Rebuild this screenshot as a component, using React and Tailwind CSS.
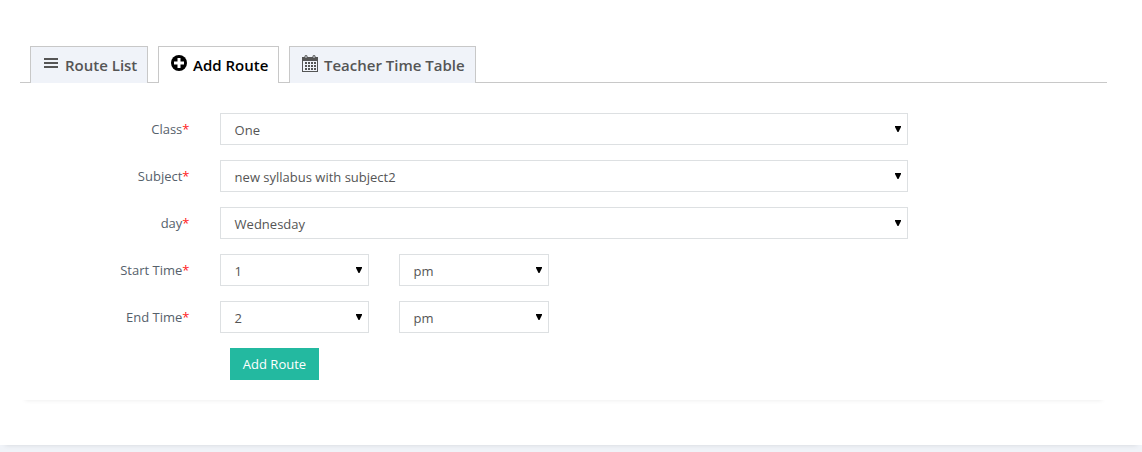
const font = "font-['Open_Sans','Noto_Sans',sans-serif]";

function MenuIcon() {
  return (
    <svg width="15" height="12" viewBox="0 0 15 12" fill="currentColor" shapeRendering="crispEdges">
      <rect y="1" width="14" height="2" />
      <rect y="5" width="14" height="2" />
      <rect y="9" width="14" height="2" />
    </svg>
  );
}

function PlusIcon() {
  return (
    <svg width="16" height="16" viewBox="0 0 16 16">
      <circle cx="8" cy="8" r="8" fill="currentColor" />
      <path d="M6.500 3h3v3.500H13v3H9.500V13h-3V9.500H3v-3h3.500z" fill="#fff" />
    </svg>
  );
}

function CalendarIcon() {
  return (
    <svg width="16" height="17" viewBox="0 0 16 17" fill="currentColor">
      <path d="M0 2h16v4H0z" />
      <path d="M0 6h1v10h14V6h1v11H0z" />
      <rect x="2.500" y="0" width="3" height="4" rx="1.500" />
      <rect x="10.500" y="0" width="3" height="4" rx="1.500" />
      <path d="M4 1v2M12 1v2" stroke="#d6dce5" strokeWidth="1" />
      {[7, 10, 13].map((y) =>
        [3, 6, 9, 12].map((x) => <rect key={`${x}-${y}`} x={x} y={y} width="2" height="2" />)
      )}
    </svg>
  );
}

function Tab({ icon, label, active, width, iconClass, textClass }) {
  return (
    <div
      className={`flex h-[37px] border border-b-0 border-[#c8c8c8] ${width} ${
        active ? "bg-white text-black" : "bg-[#f0f3f9] text-[#555]"
      }`}
    >
      <span className={`shrink-0 ${iconClass}`}>{icon}</span>
      <span className={`whitespace-nowrap pt-[7px] text-[15px] leading-[22px] font-semibold ${textClass}`}>{label}</span>
    </div>
  );
}

function Select({ value, width }) {
  return (
    <div className={`flex h-8 justify-between border border-[#dde0e2] bg-white pl-[14px] pr-[6px] ${width}`}>
      <span className="-ml-[0.400px] pt-[7px] text-[13px] leading-[18px] text-[#555]">{value}</span>
      <svg className="mt-[12px]" width="6" height="6" viewBox="0 0 6 6">
        <path d="M0 0h6v1L3.500 6h-1L0 1z" fill="#000" />
      </svg>
    </div>
  );
}

function Row({ label, children }) {
  return (
    <div className="flex h-8">
      <div className="mr-[30.500px] w-[169.500px] pt-[7px] text-right text-[13px] leading-[18px] text-[#56616b]">
        {label}
        <span className="text-[#ff2020]">*</span>
      </div>
      <div className="flex gap-[30px]">{children}</div>
    </div>
  );
}

export default function App() {
  return (
    <div className={`h-[452px] overflow-hidden bg-[#f0f3f8] ${font}`}>
      <div className="h-[445px] bg-white pt-[46px] pr-[35px] pl-[20px] shadow-[0_5px_5px_-5px_rgba(0,0,0,0.12)]">
        <div className="h-[354px] bg-white shadow-[0_5px_5px_-5px_rgba(0,0,0,0.09)]">
          <div className="flex h-[37px]">
            <div className="w-[10px] border-b border-[#c8c8c8]" />
            <Tab icon={<MenuIcon />} label="Route List" width="w-[118px]" iconClass="pt-[10px] pl-[13px]" textClass="pl-[6px]" />
            <div className="w-[10px] border-b border-[#c8c8c8]" />
            <Tab icon={<PlusIcon />} label="Add Route" active width="w-[121px]" iconClass="pt-[8px] pl-[12px]" textClass="pl-[6px]" />
            <div className="w-[10px] border-b border-[#c8c8c8]" />
            <Tab icon={<CalendarIcon />} label="Teacher Time Table" width="w-[187px]" iconClass="pt-[8px] pl-[12px]" textClass="pl-[6px]" />
            <div className="grow border-b border-[#c8c8c8]" />
          </div>
          <div className="flex flex-col gap-[15px] pt-[30px]">
            <Row label="Class">
              <Select value="One" width="w-[688px]" />
            </Row>
            <Row label="Subject">
              <Select value="new syllabus with subject2" width="w-[688px]" />
            </Row>
            <Row label="day">
              <Select value="Wednesday" width="w-[688px]" />
            </Row>
            <Row label="Start Time">
              <Select value="1" width="w-[149px]" />
              <Select value="pm" width="w-[150px]" />
            </Row>
            <Row label="End Time">
              <Select value="2" width="w-[149px]" />
              <Select value="pm" width="w-[150px]" />
            </Row>
            <button className="ml-[210px] flex h-8 w-[89px] justify-center bg-[#23b9a0] pt-[7px] text-[13px] leading-[18px] font-medium text-white">
              Add Route
            </button>
          </div>
        </div>
      </div>
    </div>
  );
}
